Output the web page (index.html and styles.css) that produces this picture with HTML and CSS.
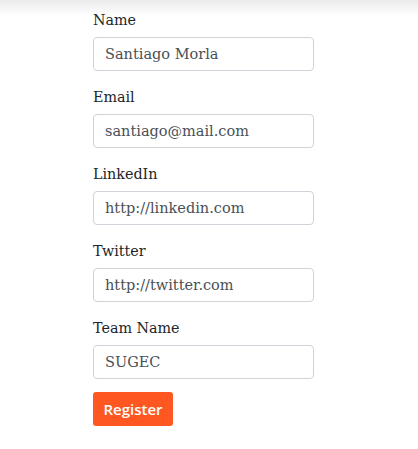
FILE: index.html
```html
<!DOCTYPE html>
<html>
<head>
<meta charset="utf-8">
<link rel="stylesheet" href="styles.css">
</head>
<body>
<div class="shade"></div>
<form class="form">
  <div class="group">
    <label class="label">Name</label>
    <input class="input" type="text" value="Santiago Morla">
  </div>
  <div class="group">
    <label class="label">Email</label>
    <input class="input" type="text" value="santiago@mail.com">
  </div>
  <div class="group">
    <label class="label">LinkedIn</label>
    <input class="input" type="text" value="http://linkedin.com">
  </div>
  <div class="group">
    <label class="label">Twitter</label>
    <input class="input" type="text" value="http://twitter.com">
  </div>
  <div class="group last">
    <label class="label">Team Name</label>
    <input class="input" type="text" value="SUGEC">
  </div>
  <button class="btn" type="button">Register</button>
</form>
</body>
</html>
```
FILE: styles.css
```css
html, body {
  margin: 0;
  padding: 0;
  background: #fff;
}
body {
  font-family: "DejaVu Serif", serif;
  font-size: 14.3px;
  color: #212529;
}
.shade {
  height: 16px;
  margin-bottom: -16px;
  background: linear-gradient(#ebebeb, #ffffff);
}
.form {
  width: 221px;
  margin-left: 93px;
  padding-top: 10px;
}
.group {
  margin-bottom: 16px;
}
.group.last {
  margin-bottom: 13px;
}
.label {
  display: block;
  line-height: 20px;
  margin-bottom: 7px;
}
.input {
  display: block;
  box-sizing: border-box;
  width: 221px;
  height: 34px;
  padding: 0 11px;
  border: 1px solid #ced4da;
  border-radius: 4px;
  font-family: "DejaVu Serif", serif;
  font-size: 14.5px;
  color: #495057;
  background: #fff;
  outline: none;
}
.btn {
  display: block;
  box-sizing: border-box;
  width: 80px;
  height: 34px;
  padding: 0;
  border: none;
  border-radius: 3px;
  background: #ff5722;
  color: #fff;
  font-family: "Open Sans", sans-serif;
  font-weight: 600;
  font-size: 15px;
}
```
